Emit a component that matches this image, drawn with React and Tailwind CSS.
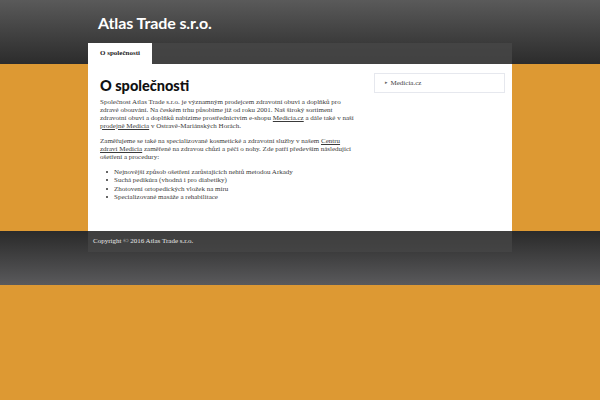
export default function App() {
  const serif = { fontFamily: '"Liberation Serif", "DejaVu Serif", serif' };
  const items = [
    'Nejnovější způsob ošetření zarůstajících nehtů metodou Arkady',
    'Suchá pedikúra (vhodná i pro diabetiky)',
    'Zhotovení ortopedických vložek na míru',
    'Specializované masáže a rehabilitace',
  ];
  return (
    <div className="w-[600px] h-[400px] overflow-hidden bg-[#dd9933] flex flex-col" style={serif}>
      {/* header */}
      <header className="h-[64px] shrink-0 bg-gradient-to-b from-[#5a5a5a] to-[#2c2c2c] flex flex-col">
        <div className="h-[43px] pl-[98px] flex items-center">
          <h1 className="text-[16px] font-bold text-white tracking-[-0.1px] font-['Lato',sans-serif] leading-none pt-[3px]">
            Atlas Trade s.r.o.
          </h1>
        </div>
        <nav className="mx-[88px] h-[21px] bg-[#474747]/80 flex">
          <a className="h-full w-[64px] bg-white flex items-center justify-center text-[7px] font-bold text-[#222]">
            O společnosti
          </a>
        </nav>
      </header>

      {/* content */}
      <main className="mx-[88px] h-[167px] shrink-0 bg-white flex pl-[12px] pr-[7px] pt-[15px] gap-[18px]">
        <div className="w-[256px] text-[7px] leading-[8px] text-[#3a3a3a]">
          <h2 className="text-[14.5px] font-black text-[#111] leading-none mb-[4px] font-['Lato',sans-serif]">
            O společnosti
          </h2>
          <p>
            Společnost Atlas Trade s.r.o. je významným prodejcem zdravotní obuvi a doplňků pro zdravé obouvání. Na českém trhu působíme již od roku 2001. Naš široký sortiment zdravotní obuvi a doplňků nabízíme prostřednictvím e-shopu{' '}
            <a className="underline decoration-[0.5px] underline-offset-1">Medicia.cz</a> a dále také v naší{' '}
            <a className="underline decoration-[0.5px] underline-offset-1">prodejně Medicia</a> v Ostravě-Mariánských Horách.
          </p>
          <p className="mt-[7px]">
            Zaměřujeme se také na specializované kosmetické a zdravotní služby v našem{' '}
            <a className="underline decoration-[0.5px] underline-offset-1">Centru zdraví Medicia</a> zaměřené na zdravou chůzi a péči o nohy. Zde patří především následující ošetření a procedury:
          </p>
          <ul className="mt-[7.5px] pl-[6px] leading-[8.3px]">
            {items.map((t) => (
              <li key={t} className="flex items-center">
                <span className="w-[2px] h-[2px] rounded-full bg-[#333] mr-[6px] shrink-0" />
                {t}
              </li>
            ))}
          </ul>
        </div>
        <aside className="flex-1">
          <div className="mt-[-6px] h-[20px] border border-[#e6e8ee] flex items-center pl-[10px] text-[7px] text-[#444]">
            <span className="text-[5px] mr-[3px] text-[#666]">▸</span>Medicia.cz
          </div>
        </aside>
      </main>

      {/* footer */}
      <footer className="h-[54px] shrink-0 bg-gradient-to-b from-[#2a2a2a] to-[#5a5a5c]">
        <div className="mx-[88px] h-[21px] bg-[#474747]/70 flex items-center pl-[5px] text-[7px] text-[#e8e8e8]">
          Copyright © 2016 Atlas Trade s.r.o.
        </div>
      </footer>
    </div>
  );
}
